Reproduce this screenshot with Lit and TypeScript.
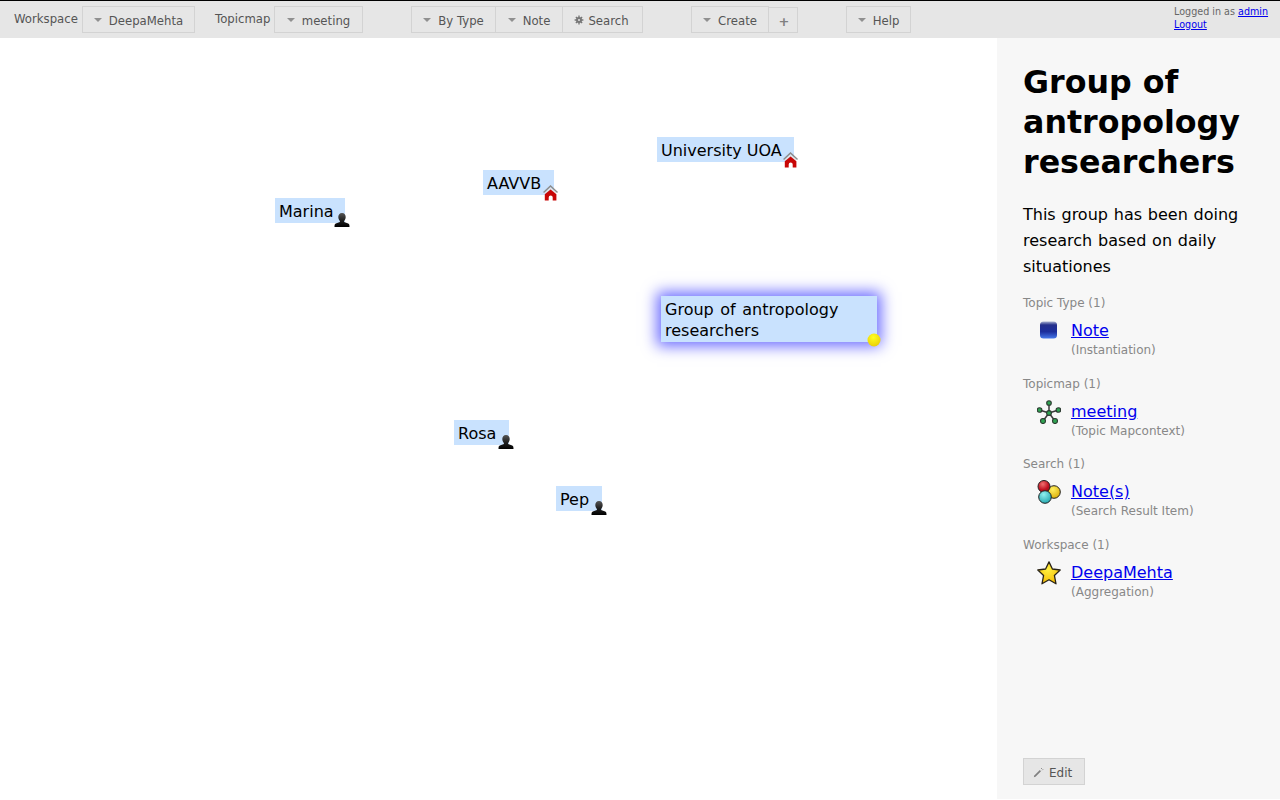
import { LitElement, html, css } from "lit";
import { customElement } from "lit/decorators.js";

const person = html`<svg class="ico" viewBox="0 0 16 16" width="16" height="16"><defs><linearGradient id="pg" x1="0" y1="0" x2="0" y2="1"><stop offset="0" stop-color="#555"/><stop offset=".5" stop-color="#222"/><stop offset="1" stop-color="#000"/></linearGradient></defs><path fill="url(#pg)" d="M8 1c2.500 0 3.700 1.800 3.700 4 0 1.700-.8 3.200-1.600 3.900v1l4.100 1.700c1 .4 1.300 1.200 1.300 3.400H.5c0-2.200.3-3 1.300-3.400l4.100-1.700v-1C5.100 8.200 4.300 6.700 4.300 5 4.300 2.800 5.500 1 8 1z"/></svg>`;
const house = html`<svg class="ico" viewBox="0 0 16 16" width="16" height="16"><path d="M.6 7.500 7.500 1l7 6.500" fill="none" stroke="#8c8c8c" stroke-width="1.500"/><path d="M1.500 8 7.500 2.700 13.600 8l-1 .6-5.100-4.200L2.500 8.600z" fill="#e4e4e4"/><path d="M1.800 15.500V9.200L7.600 4.500l5.800 4.700v6.300H9.700v-3a2 2 0 0 0-4 0v3z" fill="#c80606"/></svg>`;
const dot = html`<svg class="ico" viewBox="0 0 16 16" width="16" height="16"><defs><radialGradient id="yg" cx=".45" cy=".3" r=".8"><stop offset="0" stop-color="#ffff20"/><stop offset="1" stop-color="#e8c800"/></radialGradient></defs><circle cx="8" cy="8" r="6.500" fill="url(#yg)"/></svg>`;

const noteIcon = html`<svg viewBox="0 0 24 24" width="24" height="24"><defs><linearGradient id="ng" x1="0" y1="0" x2="0" y2="1"><stop offset="0" stop-color="#a8b2d0"/><stop offset=".2" stop-color="#25308c"/><stop offset=".6" stop-color="#1c2e9c"/><stop offset="1" stop-color="#4678ea"/></linearGradient></defs><rect x="3" y="2.500" width="17" height="17" rx="3.500" fill="url(#ng)"/></svg>`;
const mapIcon = html`<svg viewBox="0 0 24 24" width="24" height="24"><g stroke="#3a3a3a" stroke-width="1.500"><path d="M12 13 12 3M12 13 2.500 10M12 13 21.500 10M12 13 6 21M12 13 18 21"/></g><g fill="#2fa352" stroke="#2c3a30" stroke-width="1.100"><circle cx="12" cy="13" r="2.400"/><circle cx="12" cy="3" r="2.300"/><circle cx="2.600" cy="10" r="2.300"/><circle cx="21.400" cy="10" r="2.300"/><circle cx="6" cy="21" r="2.500"/><circle cx="18" cy="21" r="2.500"/></g></svg>`;
const searchIcon = html`<svg viewBox="0 0 24 24" width="24" height="24"><defs><radialGradient id="ry" cx=".4" cy=".3" r=".8"><stop offset="0" stop-color="#fff060"/><stop offset="1" stop-color="#d8a800"/></radialGradient><radialGradient id="rr" cx=".4" cy=".3" r=".8"><stop offset="0" stop-color="#f07070"/><stop offset=".6" stop-color="#c01020"/><stop offset="1" stop-color="#901018"/></radialGradient><radialGradient id="rc" cx=".4" cy=".3" r=".8"><stop offset="0" stop-color="#90f0f0"/><stop offset="1" stop-color="#18a0a8"/></radialGradient></defs><g stroke="#222" stroke-width="1"><circle cx="17" cy="12" r="6.300" fill="url(#ry)"/><circle cx="7" cy="6.500" r="6" fill="url(#rr)"/><circle cx="8" cy="17" r="6.300" fill="url(#rc)"/></g></svg>`;
const starIcon = html`<svg viewBox="0 0 24 24" width="24" height="24"><defs><radialGradient id="sg" cx=".45" cy=".35" r=".7"><stop offset="0" stop-color="#fff040"/><stop offset="1" stop-color="#f4b800"/></radialGradient></defs><path d="M12 .9 15.400 8 23.200 9 17.400 14.400 19 22.800 12 18.700 5 22.800 6.600 14.400.8 9 8.600 8z" fill="url(#sg)" stroke="#2a2418" stroke-width="1.300" stroke-linejoin="round"/></svg>`;

const nodes = [
  { l: 275, t: 198, w: 70, text: "Marina", ic: person, ix: 334, iy: 212 },
  { l: 483, t: 170, w: 71, text: "AAVVB", ic: house, ix: 543, iy: 185 },
  { l: 657, t: 137, w: 137, text: "University UOA", ic: house, ix: 783, iy: 152 },
  { l: 454, t: 420, w: 55, text: "Rosa", ic: person, ix: 498, iy: 434 },
  { l: 556, t: 486, w: 46, text: "Pep", ic: person, ix: 591, iy: 500 },
];

const fields = [
  { h: "Topic Type (1)", ic: noteIcon, link: "Note", sub: "(Instantiation)" },
  { h: "Topicmap (1)", ic: mapIcon, link: "meeting", sub: "(Topic Mapcontext)" },
  { h: "Search (1)", ic: searchIcon, link: "Note(s)", sub: "(Search Result Item)" },
  { h: "Workspace (1)", ic: starIcon, link: "DeepaMehta", sub: "(Aggregation)" },
];

const caret = html`<span class="caret"></span>`;
const gear = html`<svg class="gear" viewBox="0 0 10 10" width="10" height="10"><g stroke="#777" stroke-width="1.400"><path d="M5 .6v8.800M.6 5h8.800M1.900 1.900l6.200 6.200M8.100 1.900 1.900 8.100"/></g><circle cx="5" cy="5" r="3" fill="#777"/><circle cx="5" cy="5" r="1" fill="#e6e6e6"/></svg>`;
const pencil = html`<svg class="pencil" viewBox="0 0 11 11" width="11" height="11"><path d="M.8 10.200 1.300 8.500 6.800 3 8 4.200 2.500 9.700z" fill="#808080"/><path d="M8 2 9 1M9.200 3.200 10.200 2.200" stroke="#909090" stroke-width="1"/></svg>`;

@customElement("app-root")
export class AppRoot extends LitElement {
  static styles = css`
    :host { display: block; width: 1280px; height: 800px; overflow: hidden; font-family: "DejaVu Sans", sans-serif; background: #fff; }
    .bar { border-top: 1px solid #000; background: #e6e6e6; display: flex; align-items: flex-start; padding-top: 5px; padding-left: 14px; box-sizing: border-box; height: 38px; position: relative; font-size: 11.7px; color: #555; }
    .lbl { line-height: 27px; }
    .l1 { width: 68px; }
    .l2 { width: 59px; margin-left: 20px; }
    .btn { box-sizing: border-box; height: 27px; border: 1px solid #d3d3d3; background: #e6e6e6; display: flex; align-items: center; justify-content: center; color: #555; white-space: nowrap; padding-top: 3px; }
    .caret { width: 0; height: 0; border-left: 4px solid transparent; border-right: 4px solid transparent; border-top: 4px solid #909090; margin-right: 7px; margin-top: -2px; }
    .gear { margin-right: 4px; margin-top: -2px; margin-left: -2px; }
    .b1 { width: 113px; }
    .b2 { width: 89px; }
    .b3 { width: 85px; margin-left: 48px; }
    .b4 { width: 67px; border-left: 0; }
    .b5 { width: 80px; border-left: 0; }
    .b6 { width: 78px; margin-left: 48px; }
    .b7 { width: 29px; height: 26px; margin-top: 1px; border-left: 0; font-size: 13px; font-weight: bold; color: #808080; padding-left: 2px; }
    .b8 { width: 65px; margin-left: 48px; }
    .user { position: absolute; left: 1174px; top: 4px; font-size: 9.6px; line-height: 13px; color: #666; }
    a { color: #00e; text-decoration: underline; }
    .main { display: flex; height: 761px; }
    .canvas { position: relative; width: 997px; height: 100%; background: #fff; }
    .node { position: absolute; box-sizing: border-box; background: #c9e2fe; color: #000; font-size: 16px; line-height: 21px; padding: 3px 0 1px 4px; white-space: nowrap; height: 25px; }
    .sel { left: 661px; top: 258px; width: 216px; height: 46px; white-space: normal; padding-right: 4px; word-spacing: 1.500px; box-shadow: 0 0 14px 4px #6a6aff; }
    .ico { position: absolute; display: block; }
    .panel { flex: 1; background: #f7f7f7; box-sizing: border-box; padding: 24px 26px 14px; display: flex; flex-direction: column; }
    h1 { margin: 0; font-size: 31.7px; font-weight: bold; line-height: 40px; color: #000; }
    .desc { margin: 20px 0 0; font-size: 16px; line-height: 26px; color: #000; word-spacing: 0.7px; }
    .fh { font-size: 12px; line-height: 14px; color: #888; }
    .fr { display: grid; grid-template-columns: 48px 1fr; margin-top: 11px; }
    .fi { padding-left: 14px; margin-top: -2px; height: 24px; }
    .fi svg { display: block; }
    .fl { font-size: 16px; line-height: 20px; }
    .fs { font-size: 12px; line-height: 16px; color: #888; margin-top: 1px; }
    .fields { display: flex; flex-direction: column; gap: 18.700px; margin-top: 16px; }
    .edit { margin-top: auto; width: 62px; height: 27px; box-sizing: border-box; border: 1px solid #d3d3d3; background: #e6e6e6; font-size: 12px; color: #555; display: flex; align-items: center; padding: 2px 0 0 9px; }
    .pencil { margin-right: 5px; }
  `;
  render() {
    return html`
      <div class="bar">
        <span class="lbl l1">Workspace</span>
        <div class="btn b1">${caret}DeepaMehta</div>
        <span class="lbl l2">Topicmap</span>
        <div class="btn b2">${caret}meeting</div>
        <div class="btn b3">${caret}By Type</div>
        <div class="btn b4">${caret}Note</div>
        <div class="btn b5">${gear}Search</div>
        <div class="btn b6">${caret}Create</div>
        <div class="btn b7">+</div>
        <div class="btn b8">${caret}Help</div>
        <div class="user">Logged in as <a href="#">admin</a><br /><a href="#">Logout</a></div>
      </div>
      <div class="main">
        <div class="canvas">
          ${nodes.map(n => html`
            <div class="node" style="left:${n.l}px;top:${n.t - 38}px;width:${n.w}px">${n.text}</div>
            <div class="ico" style="left:${n.ix}px;top:${n.iy - 38}px">${n.ic}</div>`)}
          <div class="node sel">Group of antropology researchers</div>
          <div class="ico" style="left:866px;top:294px">${dot}</div>
        </div>
        <div class="panel">
          <h1>Group of antropology researchers</h1>
          <p class="desc">This group has been doing research based on daily situationes</p>
          <div class="fields">
            ${fields.map(f => html`
              <div class="field">
                <div class="fh">${f.h}</div>
                <div class="fr">
                  <div class="fi">${f.ic}</div>
                  <div>
                    <div class="fl"><a href="#">${f.link}</a></div>
                    <div class="fs">${f.sub}</div>
                  </div>
                </div>
              </div>`)}
          </div>
          <div class="edit">${pencil}Edit</div>
        </div>
      </div>
    `;
  }
}
